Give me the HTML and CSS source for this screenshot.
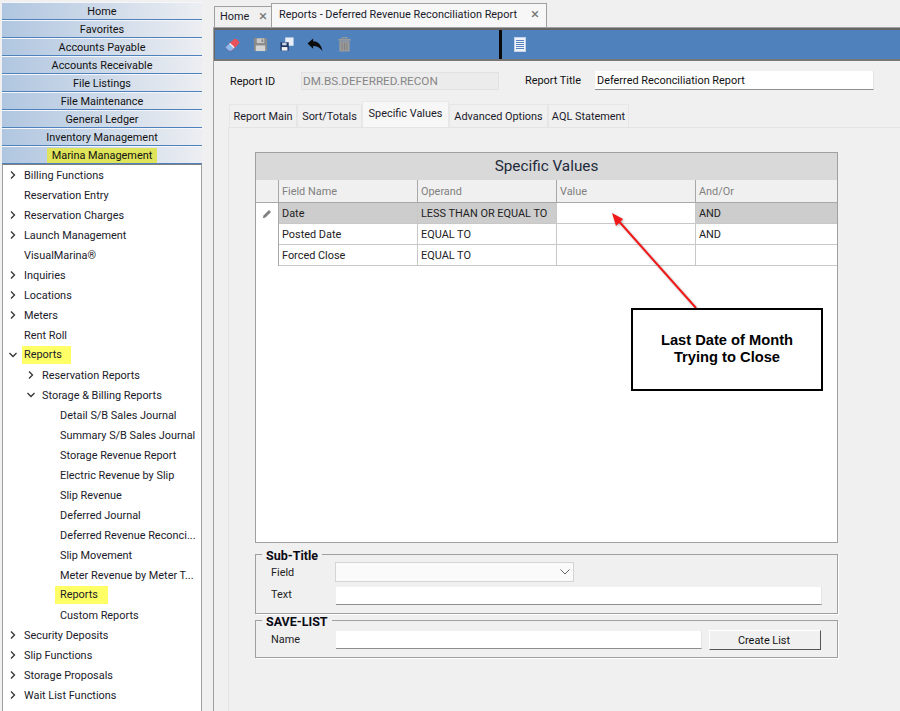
FILE: index.html
```html
<!DOCTYPE html>
<html lang="en">
<head>
<meta charset="utf-8">
<title>Deferred Revenue Reconciliation Report</title>
<link rel="stylesheet" href="styles.css">
</head>
<body>
<div class="app">
  <aside class="sidebar">
    <div class="acc"><span>Home</span></div>
    <div class="acc"><span>Favorites</span></div>
    <div class="acc"><span>Accounts Payable</span></div>
    <div class="acc"><span>Accounts Receivable</span></div>
    <div class="acc"><span>File Listings</span></div>
    <div class="acc"><span>File Maintenance</span></div>
    <div class="acc"><span>General Ledger</span></div>
    <div class="acc"><span>Inventory Management</span></div>
    <div class="acc"><span class="hl-acc">Marina Management</span></div>
    <nav class="tree">
      <div class="node"><svg class="chev" viewBox="0 0 8 8"><path d="M2 0.5 L5.5 4 L2 7.5"/></svg><span>Billing Functions</span></div>
      <div class="node"><i class="nochev"></i><span>Reservation Entry</span></div>
      <div class="node"><svg class="chev" viewBox="0 0 8 8"><path d="M2 0.5 L5.5 4 L2 7.5"/></svg><span>Reservation Charges</span></div>
      <div class="node"><svg class="chev" viewBox="0 0 8 8"><path d="M2 0.5 L5.5 4 L2 7.5"/></svg><span>Launch Management</span></div>
      <div class="node"><i class="nochev"></i><span>VisualMarina®</span></div>
      <div class="node"><svg class="chev" viewBox="0 0 8 8"><path d="M2 0.5 L5.5 4 L2 7.5"/></svg><span>Inquiries</span></div>
      <div class="node"><svg class="chev" viewBox="0 0 8 8"><path d="M2 0.5 L5.5 4 L2 7.5"/></svg><span>Locations</span></div>
      <div class="node"><svg class="chev" viewBox="0 0 8 8"><path d="M2 0.5 L5.5 4 L2 7.5"/></svg><span>Meters</span></div>
      <div class="node"><i class="nochev"></i><span>Rent Roll</span></div>
      <div class="node"><svg class="chev" viewBox="0 0 8 8"><path d="M0.5 2 L4 5.5 L7.5 2"/></svg><span class="hl">Reports</span></div>
      <div class="node lvl1"><svg class="chev" viewBox="0 0 8 8"><path d="M2 0.5 L5.5 4 L2 7.5"/></svg><span>Reservation Reports</span></div>
      <div class="node lvl1"><svg class="chev" viewBox="0 0 8 8"><path d="M0.5 2 L4 5.5 L7.5 2"/></svg><span>Storage &amp; Billing Reports</span></div>
      <div class="node lvl2"><span>Detail S/B Sales Journal</span></div>
      <div class="node lvl2"><span>Summary S/B Sales Journal</span></div>
      <div class="node lvl2"><span>Storage Revenue Report</span></div>
      <div class="node lvl2"><span>Electric Revenue by Slip</span></div>
      <div class="node lvl2"><span>Slip Revenue</span></div>
      <div class="node lvl2"><span>Deferred Journal</span></div>
      <div class="node lvl2"><span>Deferred Revenue Reconci...</span></div>
      <div class="node lvl2"><span>Slip Movement</span></div>
      <div class="node lvl2"><span>Meter Revenue by Meter T...</span></div>
      <div class="node lvl2"><span class="hl">Reports</span></div>
      <div class="node lvl2"><span>Custom Reports</span></div>
      <div class="node"><svg class="chev" viewBox="0 0 8 8"><path d="M2 0.5 L5.5 4 L2 7.5"/></svg><span>Security Deposits</span></div>
      <div class="node"><svg class="chev" viewBox="0 0 8 8"><path d="M2 0.5 L5.5 4 L2 7.5"/></svg><span>Slip Functions</span></div>
      <div class="node"><svg class="chev" viewBox="0 0 8 8"><path d="M2 0.5 L5.5 4 L2 7.5"/></svg><span>Storage Proposals</span></div>
      <div class="node"><svg class="chev" viewBox="0 0 8 8"><path d="M2 0.5 L5.5 4 L2 7.5"/></svg><span>Wait List Functions</span></div>
    </nav>
  </aside>

  <main class="main">
    <div class="doc-tabs">
      <div class="doc-tab"><span>Home</span><b class="x">×</b></div>
      <div class="doc-tab active"><span>Reports - Deferred Revenue Reconciliation Report</span><b class="x">×</b></div>
    </div>
    <div class="panel">
      <div class="toolbar">
        <svg class="tool" viewBox="0 0 16 16"><path d="M0.5 11 L9.5 2.5 Q11 1.2 12.5 2.5 L15 5 Q16 6.2 14.5 7.5 L7.5 14.5 L4 14.5 Z" fill="#e8505a"/><path d="M0.5 11 L5 6.8 L9.8 11.4 L7 14.5 L4 14.5 Z" fill="#8dbdf0"/><path d="M5 6.8 L9.8 11.4" stroke="#f4f4f4" stroke-width="1.4"/></svg>
        <svg class="tool" viewBox="0 0 16 16"><path d="M1 1 H14 L15 2 V15 H1 Z" fill="#8a8a8a"/><rect x="4" y="1.5" width="8" height="5" fill="#c8c8c8"/><rect x="9" y="2.5" width="2" height="3" fill="#8a8a8a"/><rect x="3" y="9" width="10" height="6" fill="#d4d4d4"/></svg>
        <svg class="tool saveas" viewBox="0 0 16 16"><rect x="6" y="0.5" width="9.5" height="9.5" fill="#e8eef8"/><path d="M0.5 6 H10 V15.5 H0.5 Z" fill="#1f3764"/><rect x="2.5" y="6.5" width="5" height="3" fill="#c6d4ea"/><rect x="2" y="11.5" width="6.5" height="4" fill="#f2f2f2"/></svg>
        <svg class="tool undo" viewBox="0 0 17 16"><path d="M0.5 7 L6.5 1.5 L6.5 4.5 Q14.5 4.5 16.5 15 Q13 9.5 6.5 9.5 L6.5 12.5 Z" fill="#0c0c0c"/></svg>
        <svg class="tool" viewBox="0 0 16 16"><rect x="5.5" y="0.5" width="5" height="2" fill="none" stroke="#9a9a9a"/><rect x="1.5" y="2" width="13" height="2" fill="#9a9a9a"/><path d="M2.5 4.5 H13.5 V15.5 H2.5 Z" fill="#9a9a9a"/><path d="M5.5 6 V14 M8 6 V14 M10.5 6 V14" stroke="#7f7f7f"/></svg>
        <i class="tool-sep"></i>
        <svg class="tool page" viewBox="0 0 12 15"><rect x="0.5" y="0.5" width="11" height="14" fill="#eef2fa" stroke="#c6d2ea"/><path d="M2 3.5 H10 M2 5.5 H10 M2 7.5 H10 M2 9.5 H10 M2 11.5 H10" stroke="#5a80c0"/></svg>
      </div>

      <div class="meta">
        <label class="meta-l">Report ID</label>
        <div class="ro">DM.BS.DEFERRED.RECON</div>
        <label class="meta-t">Report Title</label>
        <div class="inp title-inp">Deferred Reconciliation Report</div>
      </div>

      <div class="tabs">
        <div class="tab w1">Report Main</div>
        <div class="tab w2">Sort/Totals</div>
        <div class="tab w3 on">Specific Values</div>
        <div class="tab w4">Advanced Options</div>
        <div class="tab w5">AQL Statement</div>
      </div>

      <div class="body">
        <section class="grid">
          <div class="g-title">Specific Values</div>
          <div class="g-row g-head">
            <div class="c c0"></div><div class="c c1">Field Name</div><div class="c c2">Operand</div><div class="c c3">Value</div><div class="c c4">And/Or</div>
          </div>
          <div class="g-row sel">
            <div class="c c0"><svg class="pencil" viewBox="0 0 10 10"><path d="M0.8 9.2 L1.5 6.5 L7 1 L9 3 L3.5 8.5 Z" fill="#808080"/></svg></div><div class="c c1">Date</div><div class="c c2">LESS THAN OR EQUAL TO</div><div class="c c3"></div><div class="c c4">AND</div>
          </div>
          <div class="g-row">
            <div class="c c0"></div><div class="c c1">Posted Date</div><div class="c c2">EQUAL TO</div><div class="c c3"></div><div class="c c4">AND</div>
          </div>
          <div class="g-row">
            <div class="c c0"></div><div class="c c1">Forced Close</div><div class="c c2">EQUAL TO</div><div class="c c3"></div><div class="c c4"></div>
          </div>
        </section>

        <fieldset class="fs sub">
          <legend>Sub-Title</legend>
          <div class="f-row r1">
            <label>Field</label>
            <div class="select"><svg viewBox="0 0 10 6"><path d="M0.5 0.5 L5 5 L9.5 0.5"/></svg></div>
          </div>
          <div class="f-row r2">
            <label>Text</label>
            <div class="inp text-inp"></div>
          </div>
        </fieldset>

        <fieldset class="fs save">
          <legend>SAVE-LIST</legend>
          <div class="f-row">
            <label>Name</label>
            <div class="inp name-inp"></div>
            <div class="btn">Create List</div>
          </div>
        </fieldset>
      </div>
    </div>
  </main>
</div>

<svg class="arrow" viewBox="0 0 900 711"><path d="M696 308 L616 218" stroke="#f01818" stroke-width="2" fill="none"/><path d="M612 213 L623 219 L616 226 Z" fill="#f01818"/></svg>
<div class="callout">Last Date of Month<br>Trying to Close</div>
</body>
</html>
```

FILE: styles.css
```css
* { box-sizing: border-box; }
html, body { margin: 0; height: 711px; overflow: hidden; background: #f0f0f0; }
body { font-family: Roboto, "Noto Sans", sans-serif; font-size: 10.9px; color: #1a1a2a; position: relative; }
.app { display: flex; height: 711px; }

.sidebar { width: 200px; margin-left: 2px; padding-top: 2px; flex: none; display: flex; flex-direction: column; height: 711px; }
.acc { height: 18px; flex: none; display: flex; align-items: center; justify-content: center; background: linear-gradient(90deg, #b0c6e0, #eceef2); border-top: 1px solid #f4f6f9; border-bottom: 1px solid #4f81bd; color: #111; }
.hl-acc { background: #dfe45a; height: 15px; line-height: 15px; width: 110px; text-align: center; white-space: nowrap; }
.tree { flex: 1; background: #fff; border: 1px solid #a0a0a0; border-bottom: 0; border-top-color: #808080; overflow: hidden; }
.node { height: 20px; display: flex; align-items: center; padding-left: 6px; white-space: nowrap; }
.chev { width: 8px; height: 8px; fill: none; stroke: #333; stroke-width: 1.3; flex: none; margin-right: 6px; }
.nochev { width: 14px; flex: none; }
.node > span { padding: 1px 2px 1px 1px; }
.hl { background: #ffff66; height: 18px; line-height: 18px; width: 49px; padding: 0 0 0 2px !important; margin-left: -1px; }
.lvl1 { padding-left: 24px; }
.lvl2 { padding-left: 56px; }
.lvl2 .hl { width: 53px; padding: 0 0 0 5px !important; margin-left: -4px; }

.main { flex: 1; min-width: 0; margin-left: 11px; padding-top: 3px; }
.doc-tabs { display: flex; align-items: flex-end; height: 24px; padding-left: 1px; }
.doc-tab { height: 21px; width: 58px; background: #f0f0f0; border: 1px solid #a0a0a0; border-bottom: 0; display: flex; align-items: center; justify-content: space-between; padding: 0 4px 1px 5px; white-space: nowrap; }
.doc-tab.active { height: 24px; width: 276px; background: #f7f7f7; padding: 0 7px 2px 7px; margin-left: -1px; }
.x { font-weight: 400; font-size: 15px; color: #777; line-height: 1; }
.panel { border-top: 1px solid #a0a0a0; border-left: 1px solid #a0a0a0; height: 684px; }
.toolbar { height: 33px; background: #4f81bd; border-top: 2px solid #666; border-bottom: 2px solid #777; border-left: 1px solid #666; display: flex; align-items: center; padding: 0 0 1px 10px; }
.tool { width: 15px; height: 15px; margin-right: 12.5px; flex: none; }
.saveas { width: 14px; height: 14px; margin-right: 12px; }
.undo { width: 18px; margin-right: 13px; }
.tool-sep { width: 3px; height: 29px; margin-bottom: -1px; background: #0a0a0a; margin-left: 134px; margin-right: 12px; flex: none; }
.page { width: 12px; height: 15px; }

.meta { height: 39px; padding-top: 2px; display: flex; align-items: center; color: #111; padding-left: 16px; }
.meta-l { width: 71px; }
.ro { width: 198px; height: 18px; border: 1px solid #e2e2e2; background: #ececec; color: #868686; line-height: 17px; padding-left: 1px; font-size: 11.7px; margin-top: -1px; }
.meta-t { margin-left: 26px; width: 70px; margin-top: -3px; }
.inp { background: #fff; border-bottom: 1px solid #8e8e8e; border-right: 1px solid #e4e4e4; }
.title-inp { width: 279px; height: 19px; line-height: 19px; padding-left: 2px; margin-top: -3px; }

.tabs { display: flex; align-items: flex-end; height: 27px; padding-left: 15px; }
.tab { height: 23px; border: 1px solid #e6e6e6; border-bottom: 0; display: flex; align-items: center; justify-content: center; background: #f0f0f0; white-space: nowrap; }
.tab.on { height: 26px; background: #f7f7f7; border-color: #e8e8e8; padding-bottom: 3px; }
.w1 { width: 68px; } .w2 { width: 65px; } .w3 { width: 87px; } .w4 { width: 99px; } .w5 { width: 81px; }

.body { border-top: 1px solid #e4e4e4; border-left: 1px solid #e4e4e4; height: 600px; margin-left: 14px; padding: 24px 0 0 26px; }
.grid { width: 583px; height: 391px; border: 1px solid #a0a0a0; background: #fff; }
.g-title { height: 27px; background: #d9d9d9; text-align: center; font-size: 15.3px; line-height: 27px; color: #222a3a; }
.g-row { display: flex; height: 21px; }
.g-head { height: 23px; background: #f0f0f0; border-bottom: 1px solid #a8a8a8; color: #808080; }
.c { height: 100%; padding-left: 3px; display: flex; align-items: center; border-right: 1px solid #c8c8c8; border-bottom: 1px solid #c8c8c8; white-space: nowrap; }
.g-head .c { border-bottom: 0; border-right-color: #a8a8a8; }
.c0 { width: 23px; border-bottom: 0; border-right-color: #a8a8a8; justify-content: center; padding: 0; }
.c1 { width: 139px; } .c2 { width: 139px; } .c3 { width: 139px; } .c4 { width: 141px; border-right: 0; }
.g-row:not(.g-head) { color: #222; }
.sel .c1, .sel .c2, .sel .c4 { background: #cdcdcd; }
.pencil { width: 10px; height: 10px; }

.fs { margin: 0; padding: 0; border: 1px solid #a0a0a0; width: 583px; min-width: 0; box-shadow: 1px 1px 0 #fff; }
.fs legend { font-weight: 700; font-size: 12.5px; color: #0a0a14; margin-left: 6px; padding: 0 4px; line-height: 17px; height: 14px; }
.sub { height: 67px; margin-top: 4px; }
.save { height: 45px; margin-top: -1px; }
.f-row { display: flex; align-items: center; padding-left: 15px; }
.f-row label { width: 65px; color: #222; flex: none; }
.r1 { height: 20px; margin-top: 1px; }
.r2 { height: 18px; margin-top: 5px; }
.r2 label { padding-bottom: 3px; }
.select { width: 239px; height: 20px; margin-left: -1px; background: #fafafa; border: 1px solid #d4d4d4; display: flex; align-items: center; justify-content: flex-end; padding-right: 3px; }
.select svg { width: 10px; height: 6px; fill: none; stroke: #666; stroke-width: 1; }
.text-inp { width: 486px; height: 18px; }
.save .f-row { height: 20px; margin-top: 3px; }
.save label { padding-bottom: 2px; }
.name-inp { width: 366px; height: 18px; }
.btn { width: 112px; height: 20px; margin-left: 7px; background: #f0f0f0; border: 1px solid #fff; border-right: 1px solid #555; border-bottom: 1px solid #555; text-align: center; line-height: 19px; color: #111; padding-right: 2px; }

.arrow { position: absolute; left: 0; top: 0; width: 900px; height: 711px; pointer-events: none; filter: drop-shadow(1px 1px 1px rgba(0,0,0,.3)); }
.callout { position: absolute; left: 631px; top: 308px; width: 192px; height: 83px; padding-bottom: 2px; background: #fff; border: 2px solid #000; display: flex; align-items: center; justify-content: center; text-align: center; font-family: "Liberation Sans", Arial, sans-serif; font-weight: 700; font-size: 14.7px; line-height: 17px; color: #000; }
```
